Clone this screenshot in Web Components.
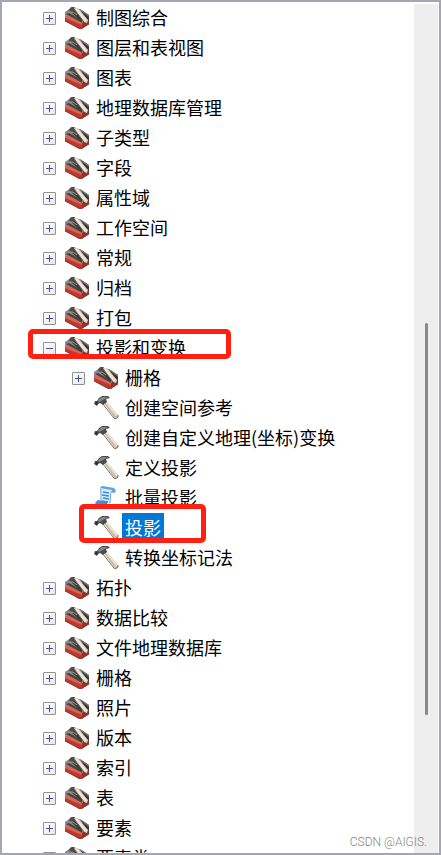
<!DOCTYPE html>
<html lang="zh-CN">
<head>
<meta charset="utf-8">
<meta name="viewport" content="width=device-width, initial-scale=1">
<title>工具箱</title>
<style>
html, body { height: 100%; margin: 0; }
body { background: #fff; color: #000; font-family: "Noto Sans CJK SC", "Noto Sans", sans-serif; font-size: 18px; }
</style>
</head>
<body>
<toolbox-panel>
  <tree-item icon="box" label="制图综合"></tree-item>
  <tree-item icon="box" label="图层和表视图"></tree-item>
  <tree-item icon="box" label="图表"></tree-item>
  <tree-item icon="box" label="地理数据库管理"></tree-item>
  <tree-item icon="box" label="子类型"></tree-item>
  <tree-item icon="box" label="字段"></tree-item>
  <tree-item icon="box" label="属性域"></tree-item>
  <tree-item icon="box" label="工作空间"></tree-item>
  <tree-item icon="box" label="常规"></tree-item>
  <tree-item icon="box" label="归档"></tree-item>
  <tree-item icon="box" label="打包"></tree-item>
  <tree-item icon="box" label="投影和变换" open mark="group">
    <tree-item icon="box" label="栅格"></tree-item>
    <tree-item icon="hammer" label="创建空间参考"></tree-item>
    <tree-item icon="hammer" label="创建自定义地理(坐标)变换"></tree-item>
    <tree-item icon="hammer" label="定义投影"></tree-item>
    <tree-item icon="script" label="批量投影"></tree-item>
    <tree-item icon="hammer" label="投影" selected mark="tool"></tree-item>
    <tree-item icon="hammer" label="转换坐标记法"></tree-item>
  </tree-item>
  <tree-item icon="box" label="拓扑"></tree-item>
  <tree-item icon="box" label="数据比较"></tree-item>
  <tree-item icon="box" label="文件地理数据库"></tree-item>
  <tree-item icon="box" label="栅格"></tree-item>
  <tree-item icon="box" label="照片"></tree-item>
  <tree-item icon="box" label="版本"></tree-item>
  <tree-item icon="box" label="索引"></tree-item>
  <tree-item icon="box" label="表"></tree-item>
  <tree-item icon="box" label="要素"></tree-item>
  <tree-item icon="box" label="要素类"></tree-item>
  <scroll-track slot="scroll"></scroll-track>
  <span slot="credit">CSDN @AIGIS.</span>
</toolbox-panel>
<script>
const ICONS = {
  box: `
    <path d="M0 6 3 4 6 1 9 1 12 3 15 3 24 9 24 13 17 17 0 10Z" fill="#7d7977"/>
    <path d="M4 4 7 1 9 1 11 4 10 6 6 6Z" fill="#4d4a49"/>
    <path d="M0 6 3 5 7 7 16 14 16 16 0 10Z" fill="#8e8a88"/>
    <path d="M1 8 4 7 17 14 17 17Z" fill="#4a4443"/>
    <path d="M5 5 10 5 18 13 16 15Z" fill="#3a3635"/>
    <path d="M5 6 8 6 12 9" fill="none" stroke="#a9a5a2"/>
    <path d="M15 3 24 9 24 11 21 12Z" fill="#76706d"/>
    <path d="M16 5 24 11 24 14 20 13Z" fill="#37302f"/>
    <path d="M0 10 17 17 17 23 14 23 0 15Z" fill="#c3372a"/>
    <path d="M0 10 3 10 17 17 17 19 0 12Z" fill="#dc6254"/>
    <path d="M17 17 24 13 24 18 17 23Z" fill="#a22c22"/>
    <path d="M18 16 24 13 24 15 18 18Z" fill="#5b3a35"/>
    <path d="M0 15 14 22 17 22 24 18" fill="none" stroke="#6d443e"/>
    <path d="M9 2 13 2 23 14 22 17 19 16Z" fill="#d8cfbe"/>
    <path d="M11 3 21 15" fill="none" stroke="#eee7da" stroke-width="2"/>
    <path d="M9 3 19 16" fill="none" stroke="#6b655d"/>`,
  hammer: `
    <path d="M9 6 12 5 24 19 24 22 21 23 19 20Z" fill="#c9bca5"/>
    <path d="M12 6 23 20" fill="none" stroke="#ebe2d0" stroke-width="2"/>
    <path d="M9 8 19 21 21 23 24 21 24 19" fill="none" stroke="#80776a"/>
    <path d="M0 8 1 5 3 5 5 2 8 0 14 0 16 2 12 3 13 6 9 9 6 7 4 8 3 10Z" fill="#4a4c4e"/>
    <path d="M4 4 8 1 14 1 9 4 5 6Z" fill="#85888a"/>
    <path d="M1 7 3 6 4 8 3 9Z" fill="#25282a"/>`,
  script: `
    <path d="M6 2 8 0 20 2 22 5 20 7 17 6 16 17 14 22 4 20 1 17 4 14 7 15Z" fill="#a7d3f6"/>
    <path d="M7 2 18 3 16 15 14 20 7 18Z" fill="#d7edff"/>
    <path d="M6 2 8 0 20 2 22 5 20 7 17 6 18 4Z" fill="#62a3de"/>
    <path d="M1 17 4 14 13 16 14 22 4 20Z" fill="#4a8fcf"/>
    <path d="M9 6 15 7M8 9 15 10M9 12 15 13M8 15 14 16" stroke="#3c8bd1" stroke-width="1.500"/>
    <path d="M7 3 7 15M17 6 16 17" fill="none" stroke="#78aedd"/>`
};

customElements.define('tool-icon', class extends HTMLElement {
  connectedCallback() {
    const root = this.attachShadow({ mode: 'open' });
    root.innerHTML = `<style>
      :host { display: block; flex: none; width: 25px; height: 24px; }
      svg { display: block; width: 100%; height: 100%; }
    </style>
    <svg viewBox="0 0 25 24" aria-hidden="true">${ICONS[this.getAttribute('name')]}</svg>`;
  }
});

customElements.define('tree-item', class extends HTMLElement {
  connectedCallback() {
    const icon = this.getAttribute('icon');
    const label = this.getAttribute('label');
    const open = this.hasAttribute('open');
    const mark = this.getAttribute('mark');
    this.setAttribute('role', 'treeitem');
    const root = this.attachShadow({ mode: 'open' });
    root.innerHTML = `<style>
      :host { display: block; }
      .row { display: flex; align-items: center; height: 30px; position: relative; }
      button, .blank { flex: none; width: 13px; height: 13px; margin-right: 9px; }
      button { box-sizing: border-box; padding: 0; border: 1px solid #929292; border-radius: 1px;
        background: linear-gradient(135deg, #fff, #e8e8e8); }
      button svg { display: block; width: 11px; height: 11px; }
      .label { margin-left: 3px; padding: 0 3px 2px; line-height: 28px; white-space: nowrap; }
      :host([selected]) .label { background: #0078d7; color: #fff; }
      .children { padding-left: 29px; }
      .mark { position: absolute; z-index: 1; box-sizing: border-box; border: 5px solid #ff2012;
        border-radius: 5px; pointer-events: none; }
      .mark.group { left: -15px; top: -4px; width: 203px; height: 30px; }
      .mark.tool { left: 7px; top: -9px; width: 127px; height: 39px; }
    </style>
    <div class="row">
      ${icon === 'box'
        ? `<button type="button" aria-label="${open ? '折叠' : '展开'}" aria-expanded="${open}">
            <svg viewBox="0 0 11 11"><path d="M2 5.500H9${open ? '' : 'M5.500 2V9'}" stroke="#3d569f" stroke-width="1"/></svg>
          </button>`
        : '<span class="blank"></span>'}
      <tool-icon name="${icon}"></tool-icon>
      <span class="label">${label}</span>
      ${mark ? `<span class="mark ${mark}"></span>` : ''}
    </div>
    ${open ? '<div class="children" role="group"><slot></slot></div>' : ''}`;
  }
});

customElements.define('scroll-track', class extends HTMLElement {
  connectedCallback() {
    const root = this.attachShadow({ mode: 'open' });
    root.innerHTML = `<style>
      :host { display: grid; grid-template-rows: 319fr 392fr 138fr; justify-items: center;
        box-sizing: border-box; width: 24px; height: 100%; background: #eee; }
      .thumb { grid-row: 2; width: 3px; border-radius: 2px; background: #888; }
    </style><div class="thumb"></div>`;
  }
});

customElements.define('toolbox-panel', class extends HTMLElement {
  connectedCallback() {
    const root = this.attachShadow({ mode: 'open' });
    root.innerHTML = `<style>
      :host { display: flex; position: relative; box-sizing: border-box; height: 100vh; overflow: hidden;
        border: 2px solid #a4a6b1; background: #fff; }
      .tree { flex: 1; min-width: 0; overflow: hidden; padding: 1px 0 0 41px; }
      .bar { flex: none; padding: 2px 1px 0 0; box-sizing: border-box; height: 100%; }
      .credit { position: absolute; right: 12px; bottom: 3px; color: #858585;
        font: 300 12px/16px Roboto, sans-serif; white-space: nowrap; }
    </style>
    <div class="tree" role="tree"><slot></slot></div>
    <div class="bar"><slot name="scroll"></slot></div>
    <div class="credit"><slot name="credit"></slot></div>`;
  }
});
</script>
</body>
</html>
